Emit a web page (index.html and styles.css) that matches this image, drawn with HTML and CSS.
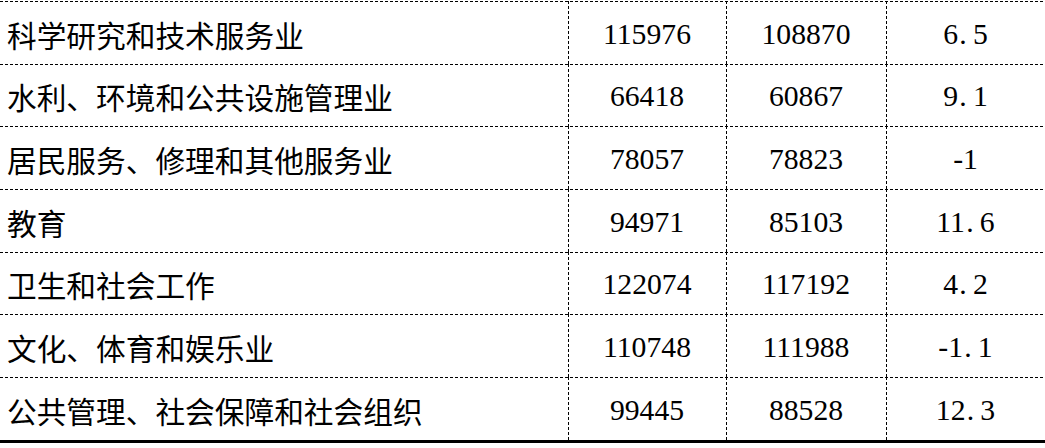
FILE: index.html
```html
<!DOCTYPE html>
<html lang="zh-CN">
<head>
<meta charset="utf-8">
<title>行业工资表</title>
<link rel="stylesheet" href="styles.css">
</head>
<body>
<div class="table">
  <div class="row"><div class="name">科学研究和技术服务业</div><div class="num">115976</div><div class="num">108870</div><div class="num">6<span class="pt">.</span>5</div></div>
  <div class="row"><div class="name">水利、环境和公共设施管理业</div><div class="num">66418</div><div class="num">60867</div><div class="num">9<span class="pt">.</span>1</div></div>
  <div class="row"><div class="name">居民服务、修理和其他服务业</div><div class="num">78057</div><div class="num">78823</div><div class="num">-1</div></div>
  <div class="row"><div class="name">教育</div><div class="num">94971</div><div class="num">85103</div><div class="num">11<span class="pt">.</span>6</div></div>
  <div class="row"><div class="name">卫生和社会工作</div><div class="num">122074</div><div class="num">117192</div><div class="num">4<span class="pt">.</span>2</div></div>
  <div class="row"><div class="name">文化、体育和娱乐业</div><div class="num">110748</div><div class="num">111988</div><div class="num">-1<span class="pt">.</span>1</div></div>
  <div class="row"><div class="name">公共管理、社会保障和社会组织</div><div class="num">99445</div><div class="num">88528</div><div class="num">12<span class="pt">.</span>3</div></div>
</div>
</body>
</html>
```
FILE: styles.css
```css
html, body {
  margin: 0;
  padding: 0;
  background: #fff;
}
body {
  font-family: "Liberation Serif", "Noto Sans CJK SC", serif;
  font-size: 29.7px;
  color: #000;
}
.table {
  margin-top: 1px;
  display: flex;
  flex-direction: column;
  border-bottom: 3px solid #000;
}
.row {
  display: grid;
  grid-template-columns: 568px 158px 160px 1fr;
  height: 62.67px;
  background-image: repeating-linear-gradient(90deg, #000 0 3px, transparent 3px 5px);
  background-size: 100% 1px;
  background-repeat: no-repeat;
  background-position: left top;
}
.name {
  display: flex;
  align-items: center;
  padding: 4px 0 0 7px;
  white-space: nowrap;
}
.num {
  display: flex;
  align-items: center;
  justify-content: center;
  padding-top: 4px;
  background-image: repeating-linear-gradient(180deg, #000 0 3px, transparent 3px 5px);
  background-size: 1px 100%;
  background-repeat: no-repeat;
  background-position: left top;
}
.pt {
  display: inline-block;
  width: 0.5em;
  text-align: left;
  padding-left: 0.04em;
  box-sizing: border-box;
}
```
